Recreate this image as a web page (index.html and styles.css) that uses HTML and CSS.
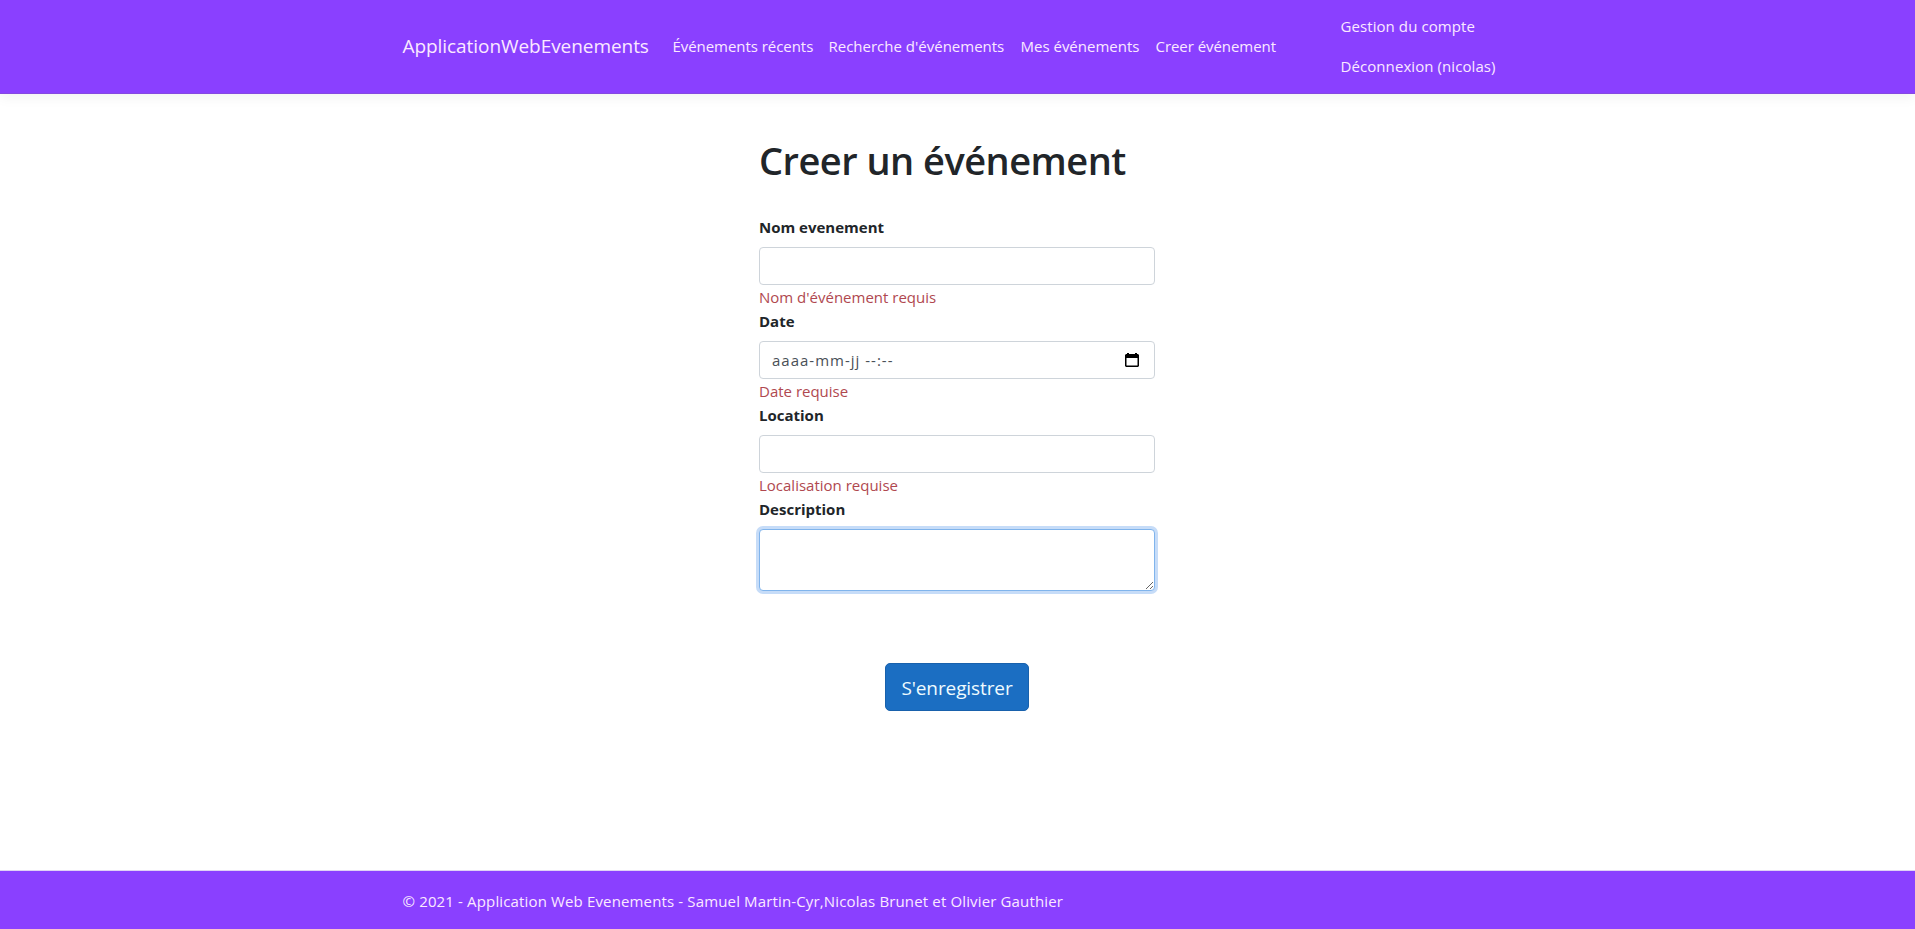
FILE: index.html
```html
<!DOCTYPE html>
<html lang="fr">
<head>
<meta charset="utf-8">
<title>Creer un événement</title>
<link rel="stylesheet" href="styles.css">
</head>
<body>
<header class="navbar">
  <div class="container">
    <a class="brand">ApplicationWebEvenements</a>
    <nav class="links">
      <a class="l1">Événements récents</a>
      <a class="l2">Recherche d'événements</a>
      <a class="l3">Mes événements</a>
      <a class="l4">Creer événement</a>
    </nav>
    <div class="account">
      <a class="gestion">Gestion du compte</a>
      <a class="logout">Déconnexion (nicolas)</a>
    </div>
  </div>
</header>
<main class="content">
  <form class="event-form">
    <h1>Creer un événement</h1>
    <label>Nom evenement</label>
    <div class="control"></div>
    <span class="error">Nom d'événement requis</span>
    <label>Date</label>
    <div class="control"><span class="date">aaaa-mm-jj --:--</span>
      <svg class="calendar" width="14" height="15" viewBox="0 0 14 15"><path fill="#000" fill-rule="evenodd" d="M2 0h2v1h6V0h2v1h1l1 1v11l-1 1H1l-1-1V2l1-1h1zM1.5 5v7.5h11V5z"/></svg>
    </div>
    <span class="error">Date requise</span>
    <label>Location</label>
    <div class="control"></div>
    <span class="error">Localisation requise</span>
    <label>Description</label>
    <textarea class="control area"></textarea>
    <button type="button" class="submit">S'enregistrer</button>
  </form>
</main>
<footer class="footer"><div class="container"><span class="copy">© 2021 - Application Web Evenements - Samuel Martin-Cyr,Nicolas Brunet et Olivier Gauthier</span></div></footer>
</body>
</html>
```
FILE: styles.css
```css
* { box-sizing: border-box; }
html, body { height: 100%; }
body {
  margin: 0;
  display: flex;
  flex-direction: column;
  background: #fff;
  color: #212529;
  font: 15px/24px "Open Sans", "Noto Sans", sans-serif;
  overflow: hidden;
}
.container {
  width: 1140px;
  margin: 0 auto;
  padding: 0 15px;
  display: flex;
  align-items: center;
}
.navbar {
  flex: none;
  height: 94px;
  display: flex;
  padding-bottom: 2px;
  background: #8a40ff;
  border-bottom: 1px solid #8549e0;
  box-shadow: 0 4px 12px rgba(0, 0, 0, .05);
  color: #fbe9ff;
}
.navbar a { white-space: nowrap; }
.brand { width: 270px; padding-top: 1px; font-size: 19px; line-height: 30px; letter-spacing: -.06px; }
.links { display: flex; width: 668px; }
.l1 { width: 156px; letter-spacing: -.05px; }
.l2 { width: 192px; }
.l3 { width: 135px; }
.l4 { letter-spacing: -.05px; }
.account { display: flex; flex-direction: column; gap: 16px; letter-spacing: .08px; }
.content { flex: 1; padding-top: 42px; }
.event-form {
  width: 397px;
  margin: 0 auto;
  padding-right: 1px;
  display: flex;
  flex-direction: column;
}
h1 {
  margin: 0 0 31px;
  font-size: 38px;
  line-height: 48px;
  font-weight: 600;
  letter-spacing: -.52px;
  white-space: nowrap;
}
label { font-weight: 700; margin-bottom: 8px; }
.control {
  height: 38px;
  width: 100%;
  border: 1px solid #ced4da;
  border-radius: 4px;
  padding: 0 12px;
  display: flex;
  align-items: center;
  justify-content: space-between;
}
.date { color: #495057; letter-spacing: 1px; }
.calendar { margin-right: 3px; }
.error { color: #b0484f; }
.area {
  display: block;
  height: 62px;
  outline: none;
  resize: both;
  background: #fff;
  border-color: #80b4ec;
  box-shadow: 0 0 0 3px #c6dcf8;
}
.submit {
  align-self: center;
  width: 144px;
  height: 48px;
  margin-top: 72px;
  padding: 2px 0 0;
  border: 1px solid #1861ac;
  border-radius: 5px;
  background: #1b6ec2;
  color: #eefbff;
  font: 19px/30px "Open Sans", "Noto Sans", sans-serif;
  letter-spacing: -.1px;
}
.footer {
  flex: none;
  height: 59px;
  display: flex;
  padding-top: 2px;
  background: #8a40ff;
  border-top: 1px solid #dfd3f5;
  color: #fbe9ff;
}
.copy { letter-spacing: .145px; }
```
